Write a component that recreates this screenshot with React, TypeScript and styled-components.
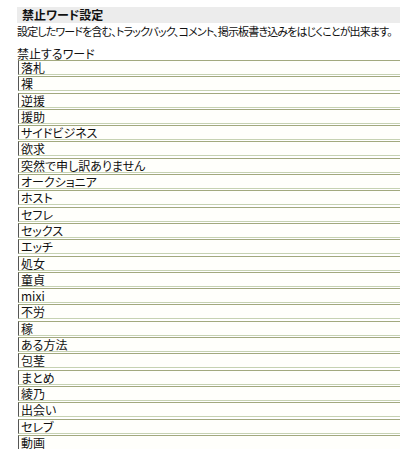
import styled, { createGlobalStyle } from "styled-components";

const words = [
  "落札",
  "裸",
  "逆援",
  "援助",
  "サイドビジネス",
  "欲求",
  "突然で申し訳ありません",
  "オークショニア",
  "ホスト",
  "セフレ",
  "セックス",
  "エッチ",
  "処女",
  "童貞",
  "mixi",
  "不労",
  "稼",
  "ある方法",
  "包茎",
  "まとめ",
  "綾乃",
  "出会い",
  "セレブ",
  "動画",
];

const GlobalStyle = createGlobalStyle`
  html, body {
    margin: 0;
    padding: 0;
    background: #ffffff;
    overflow: hidden;
  }
  body {
    font-family: "Noto Sans CJK JP", "DejaVu Sans", sans-serif;
    font-size: 12px;
    font-feature-settings: "palt";
    color: #111;
  }
`;

const Page = styled.div`
  padding: 7px 0 0 17px;
`;

const SectionTitle = styled.div`
  height: 16px;
  line-height: 16px;
  background: #ececec;
  padding-left: 5px;
  font-weight: bold;
  font-size: 12px;
`;

const Description = styled.div`
  height: 16px;
  line-height: 17px;
  white-space: nowrap;
  font-size: 11px;
  letter-spacing: -0.85px;
`;

const ListLabel = styled.div`
  margin-top: 9px;
  height: 12px;
  line-height: 12px;
`;

const WordList = styled.div`
  display: flex;
  flex-direction: column;
  gap: 1.3px;
  margin-left: 1px;
`;

const WordField = styled.div`
  box-sizing: border-box;
  height: 15px;
  padding: 0 0 0 2px;
  border-top: 1px solid #a2a97e;
  border-left: 1px solid #555;
  border-bottom: 1px solid #c6d2b2;
  background: #fffffb;
  line-height: 13px;
  white-space: nowrap;
  overflow: hidden;
`;

export default function App() {
  return (
    <Page>
      <GlobalStyle />
      <SectionTitle>禁止ワード設定</SectionTitle>
      <Description>
        設定したワードを含む、トラックバック、コメント、掲示板書き込みをはじくことが出来ます。
      </Description>
      <ListLabel>禁止するワード</ListLabel>
      <WordList>
        {words.map((w) => (
          <WordField key={w}>{w}</WordField>
        ))}
      </WordList>
    </Page>
  );
}
